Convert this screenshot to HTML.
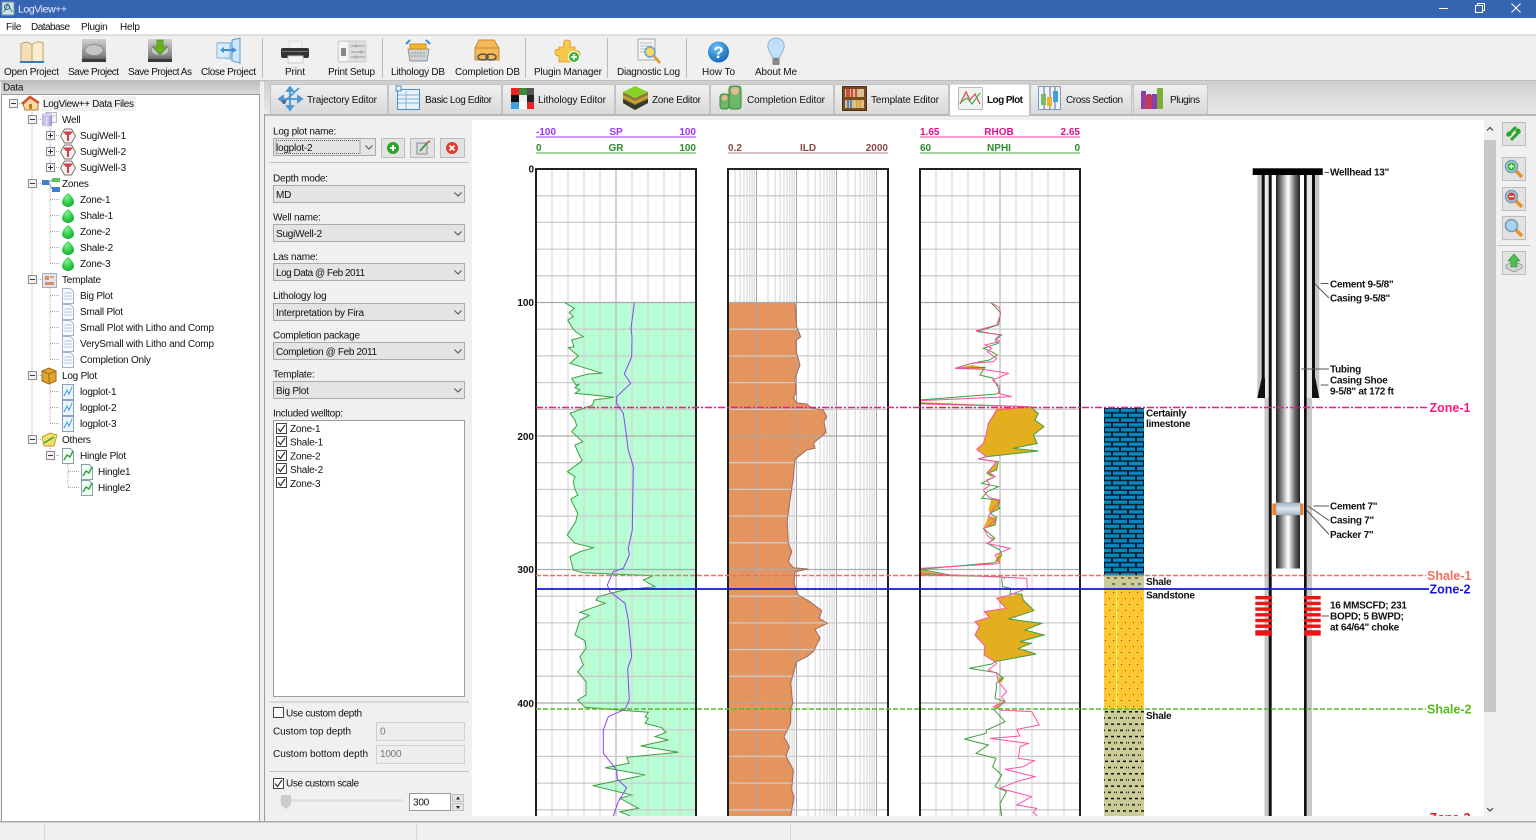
<!DOCTYPE html>
<html><head><meta charset="utf-8"><title>LogView++</title>
<style>
html,body{margin:0;padding:0;width:1536px;height:840px;overflow:hidden;background:#f0f0f0}
svg{display:block}
text{font-family:"Liberation Sans",Arial,sans-serif;font-size:10px;fill:#111;letter-spacing:-.22px}
.b{font-weight:bold;letter-spacing:0}
.w{fill:#eef}
.g{fill:#777}
.lb{font-weight:bold;fill:#111;font-size:10px;letter-spacing:-.28px}
.ns{vector-effect:non-scaling-stroke;fill:none}
.z{font-weight:bold;font-size:12.5px;letter-spacing:0}
.tl{letter-spacing:0}
</style></head><body>
<svg width="1536" height="840" viewBox="0 0 1536 840" xmlns="http://www.w3.org/2000/svg">
<defs>
<linearGradient id="tabg" x1="0" y1="0" x2="0" y2="1"><stop offset="0" stop-color="#f0f0f0"/><stop offset="1" stop-color="#d9d9d9"/></linearGradient>
<linearGradient id="barg" x1="0" y1="0" x2="0" y2="1"><stop offset="0" stop-color="#cfcfcf"/><stop offset="1" stop-color="#e9e9e9"/></linearGradient>
<linearGradient id="hdr" x1="0" y1="0" x2="0" y2="1"><stop offset="0" stop-color="#bdbdbd"/><stop offset="1" stop-color="#dedede"/></linearGradient>
<linearGradient id="tube" x1="0" y1="0" x2="1" y2="0"><stop offset="0" stop-color="#222"/><stop offset=".2" stop-color="#777"/><stop offset=".5" stop-color="#fff"/><stop offset=".55" stop-color="#eee"/><stop offset=".8" stop-color="#666"/><stop offset="1" stop-color="#222"/></linearGradient>
<linearGradient id="pack" x1="0" y1="0" x2="0" y2="1"><stop offset="0" stop-color="#9fb1c0"/><stop offset=".5" stop-color="#dde7f0"/><stop offset="1" stop-color="#a7b6c4"/></linearGradient>
<linearGradient id="disk" x1="0" y1="0" x2="0" y2="1"><stop offset="0" stop-color="#d0d0d0"/><stop offset=".7" stop-color="#8e8e8e"/><stop offset="1" stop-color="#555"/></linearGradient>
<linearGradient id="cyl" x1="0" y1="0" x2="1" y2="0"><stop offset="0" stop-color="#b4b4e6"/><stop offset=".5" stop-color="#d9d9f6"/><stop offset="1" stop-color="#8f8fd0"/></linearGradient>
<radialGradient id="blueb" cx=".4" cy=".3" r=".8"><stop offset="0" stop-color="#6cc0f5"/><stop offset="1" stop-color="#0a5db4"/></radialGradient>
<radialGradient id="grb" cx=".4" cy=".3" r=".8"><stop offset="0" stop-color="#7ff08a"/><stop offset="1" stop-color="#05a81f"/></radialGradient>
<pattern id="logg" patternUnits="userSpaceOnUse" x="756" y="0" width="40" height="10">
<path d="M.5 0V10" stroke="#aaa" stroke-width="1"/>
<path d="M12 0V10M19.100 0V10M24.100 0V10M28 0V10M31.100 0V10M33.800 0V10M36.100 0V10M38.200 0V10" stroke="#d4d4d4" stroke-width="1"/>
</pattern>
<pattern id="brick" patternUnits="userSpaceOnUse" x="1104" y="408" width="16" height="9.66">
<rect width="16" height="9.66" fill="#04202e"/>
<rect x="1" y=".8" width="14" height="3.300" fill="#0a88c4"/>
<rect x="9" y="5.600" width="14" height="3.300" fill="#0a88c4"/>
<rect x="-7" y="5.600" width="14" height="3.300" fill="#0a88c4"/>
</pattern>
<pattern id="sand" patternUnits="userSpaceOnUse" x="1104" y="589" width="8" height="12">
<rect width="8" height="12" fill="#ffc832"/>
<rect x="1" y="3" width="1" height="1" fill="#443"/><rect x="5" y="9" width="1" height="1" fill="#443"/>
</pattern>
<pattern id="shale" patternUnits="userSpaceOnUse" x="1104" y="709" width="12" height="12.4">
<rect width="12" height="12.4" fill="#cccc99"/>
<rect x="1" y="2" width="3" height="1.500" fill="#111"/><rect x="7" y="2" width="3" height="1.500" fill="#111"/>
<rect x="0" y="8.200" width="1" height="1.500" fill="#111"/><rect x="4" y="8.200" width="3" height="1.500" fill="#111"/><rect x="10" y="8.200" width="1" height="1.500" fill="#111"/>
</pattern>
<clipPath id="plot"><rect x="472" y="120" width="1012" height="696"/></clipPath>
<symbol id="drop" viewBox="0 0 14 14" overflow="visible"><path d="M7 0C10 2 13 6 13 9a6 5 0 0 1-12 0C1 6 4 2 7 0z" fill="url(#grb)"/></symbol>
<symbol id="well" viewBox="0 0 16 16" overflow="visible"><path d="M4.500 1H11.500L15.500 8L11.500 15H4.500L.5 8z" fill="#f6f0f0" stroke="#777"/><path d="M3 3.500H13L10 7H9V13H7V7H6z" fill="#c9424a"/></symbol>
<symbol id="doc" viewBox="0 0 14 16" overflow="visible"><path d="M1.500 .5H9.500L12.500 3.500V15.500H1.500z" fill="#f6f9ff" stroke="#a4b4cc"/><path d="M3 5H11M3 8H11M3 11H11" stroke="#b5c5dd"/></symbol>
<symbol id="chart" viewBox="0 0 14 16" overflow="visible"><path d="M1.500 .5H12.500V15.500H1.500z" fill="#eef3fa" stroke="#8ba0bb"/><path d="M3 12L6 6L8 10L11 3" stroke="#3aa0d8" fill="none"/></symbol>
<symbol id="hinge" viewBox="0 0 14 16" overflow="visible"><path d="M1.500 .5H9.500L12.500 3.500V15.500H1.500z" fill="#f2fff2" stroke="#8aa0b0"/><path d="M3 12L6 7L9 9L12 3" stroke="#2da14e" fill="none" stroke-width="1.400"/></symbol>
<symbol id="minus" viewBox="0 0 9 9" overflow="visible"><rect x=".5" y=".5" width="8" height="8" fill="#f2f2f2" stroke="#8c8c8c"/><path d="M2 4.500H7" stroke="#335"/></symbol>
<symbol id="plus" viewBox="0 0 9 9" overflow="visible"><rect x=".5" y=".5" width="8" height="8" fill="#f2f2f2" stroke="#8c8c8c"/><path d="M2 4.500H7M4.500 2V7" stroke="#335"/></symbol>
<symbol id="mag" viewBox="0 0 24 24" overflow="visible"><rect x=".5" y=".5" width="23" height="23" fill="#e2e2e2" stroke="#bcbcbc"/><path d="M14 14L20 20" stroke="#e5922f" stroke-width="3.500"/><circle cx="9.500" cy="9.500" r="6" fill="#a8d4ef" stroke="#7a9bb0" stroke-width="1.500"/></symbol>
<symbol id="cb" viewBox="0 0 11 11" overflow="visible"><rect x=".5" y=".5" width="10" height="10" fill="#fff" stroke="#444"/><path d="M2 5.500L4.500 8.500L9 2" stroke="#333" fill="none" stroke-width="1.200"/></symbol>
<symbol id="chev" viewBox="0 0 8 5" overflow="visible"><path d="M.5 .5L4 4L7.500 .5" stroke="#555" fill="none" stroke-width="1.100"/></symbol>
</defs>

<rect width="1536" height="840" fill="#f0f0f0"/>
<!-- title bar -->
<rect width="1536" height="18" fill="#3565b0"/>
<rect x="2" y="2" width="12" height="13" fill="#cfe3e8" stroke="#7a95aa"/><path d="M4 12L8 4L12 12" stroke="#23914a" fill="none"/><circle cx="7" cy="7" r="2.500" fill="none" stroke="#274fa0"/>
<text x="18" y="12.500" class="w" textLength="49" style="font-size:10.500px;letter-spacing:0">LogView++</text>
<path d="M1439 8.500H1448" stroke="#fff"/><path d="M1475.500 5.500h7v7h-7zM1477.500 5.500v-2h7v7h-2" fill="none" stroke="#fff"/><path d="M1511.500 3.500l9 9M1520.500 3.500l-9 9" stroke="#fff" stroke-width="1.100"/>
<!-- menu -->
<rect y="18" width="1536" height="17" fill="#fff"/>
<text x="6" y="30">File</text><text x="31" y="30" textLength="39" class="tl">Database</text><text x="81" y="30">Plugin</text><text x="120" y="30">Help</text>
<rect y="34.500" width="1536" height="1" fill="#c4c4c4"/>
<!-- toolbar -->
<rect y="35.500" width="1536" height="45" fill="#f0f0f0"/>
<rect y="80" width="1536" height="1.500" fill="#bdbdbd"/>
<path d="M262.500 38V78M382.500 38V78M525.500 38V78M607.500 38V78M686.500 38V78" stroke="#bbb"/>
<!-- Toolbar icons -->
<path d="M21 44Q27 40 32 45V62H21z" fill="#f5dfb8" stroke="#c79b63"/><path d="M32 45Q37 40 43 43V62H32z" fill="#fbeed0" stroke="#c79b63"/><path d="M20 62H44" stroke="#3c78b8" stroke-width="2"/>
<rect x="82" y="39" width="24" height="22" rx="1" fill="url(#disk)"/><ellipse cx="94" cy="50" rx="9" ry="5.500" fill="#c6c6c6" stroke="#8c8c8c"/><rect x="82" y="59" width="24" height="3" fill="#3a3a3a"/>
<rect x="148" y="39" width="24" height="22" rx="1" fill="url(#disk)"/><ellipse cx="160" cy="50" rx="9" ry="5.500" fill="#c6c6c6" stroke="#8c8c8c"/><rect x="148" y="59" width="24" height="3" fill="#3a3a3a"/><path d="M157 40H163V47H167L160 55L153 47H157z" fill="#66b31e" stroke="#3e7d12" stroke-width=".6"/>
<path d="M217 42H240V62L217 57z" fill="#a9d0ee"/><path d="M232 40L240 38V63L232 61z" fill="#cfe6f8" stroke="#5e9ad0"/><rect x="217" y="43" width="13" height="15" fill="#d7ebfa" stroke="#85b5de"/><path d="M220 50L224 47V49H232V47L237 50L232 53V51H224V53z" fill="#3f8dd4"/>
<rect x="289" y="41" width="13" height="8" fill="#f2f2f2" stroke="#ddd"/><rect x="281" y="48" width="28" height="10" rx="2" fill="#333"/><rect x="288" y="56" width="15" height="7" fill="#f4f4f4" stroke="#ccc"/><rect x="282" y="51" width="26" height="1" fill="#777"/>
<rect x="338" y="41" width="28" height="21" rx="1" fill="#dedede" stroke="#ccc"/><rect x="339" y="42" width="9" height="19" fill="#f5f5f5"/><rect x="341" y="48" width="5" height="8" fill="#888"/><path d="M351 46H365M351 52H365M351 57H365" stroke="#999"/><circle cx="356" cy="46" r="1.500" fill="#aaa"/><circle cx="361" cy="52" r="1.500" fill="#aaa"/><circle cx="356" cy="57" r="1.500" fill="#aaa"/>
<path d="M408 49H429L427 61H410z" fill="#cfd3d6" stroke="#8f969b"/><path d="M410 44H426V49H410z" fill="#f2b632" stroke="#c68a19"/><path d="M406 44L410 40M430 44L426 40" stroke="#3a90d5" stroke-width="2"/><path d="M411 53H426M411 56H426" stroke="#899" stroke-dasharray="2 1"/>
<path d="M475 48L479 40H494L499 48V60H475z" fill="#f4ba58" stroke="#c08a2c"/><path d="M475 48H499" stroke="#c08a2c"/><ellipse cx="483" cy="57" rx="5" ry="3" fill="none" stroke="#555" stroke-width="1.500"/><ellipse cx="491" cy="57" rx="5" ry="3" fill="none" stroke="#555" stroke-width="1.500"/>
<path d="M559 47H564Q562 40 567 40T570 47H575V51Q580 50 580 54T575 58V62H559V56Q555 56 555 52T559 50z" fill="#f6c84c" stroke="#e09a1e" stroke-width=".8"/><circle cx="574" cy="57" r="5.500" fill="#3bb33b" stroke="#fff"/><path d="M574 54V60M571 57H577" stroke="#fff" stroke-width="1.500"/>
<rect x="638" y="39" width="17" height="21" fill="#f4f4f4" stroke="#a8a8a8"/><path d="M640 43H652M640 46H652M640 49H646M640 52H645" stroke="#bbb"/><circle cx="650" cy="52" r="5" fill="#f4d76a" stroke="#6ca3cc" stroke-width="1.500"/><path d="M654 56L660 63" stroke="#e5922f" stroke-width="2.500"/>
<circle cx="718.500" cy="52" r="10.500" fill="url(#blueb)"/><text x="718.500" y="58" text-anchor="middle" class="b" style="font-size:17px;fill:#fff">?</text>
<path d="M776 38C770 38 767 43 768 48C769 52 772 55 772.500 58H779.500C780 55 783 52 784 48C785 43 782 38 776 38z" fill="#bfe0f8" stroke="#8fb6d6"/><rect x="772.500" y="58" width="7" height="7" rx="1" fill="#888"/>
<g>
<text x="4" y="75" class="tl" textLength="55">Open Project</text><text x="68" y="75" class="tl" textLength="51">Save Project</text><text x="128" y="75" class="tl" textLength="64">Save Project As</text><text x="201" y="75" class="tl" textLength="55">Close Project</text><text x="285" y="75" class="tl" textLength="20">Print</text><text x="328" y="75" class="tl" textLength="47">Print Setup</text><text x="391" y="75" class="tl" textLength="54">Lithology DB</text><text x="455" y="75" class="tl" textLength="65">Completion DB</text><text x="534" y="75" class="tl" textLength="68">Plugin Manager</text><text x="617" y="75" class="tl" textLength="63">Diagnostic Log</text><text x="702" y="75" class="tl" textLength="33">How To</text><text x="755" y="75" class="tl" textLength="42">About Me</text>
</g>

<!-- Left panel -->
<rect x="1" y="81" width="259" height="14" fill="url(#hdr)"/>
<text x="3" y="90.500">Data</text>
<rect x="1.500" y="94.500" width="258" height="727" fill="#fff" stroke="#9a9a9a"/>
<rect x="42" y="96" width="94" height="15" fill="#f0f0f0"/>
<g stroke="#a8a8a8" stroke-dasharray="1 1" fill="none">
<path d="M17 103.500H22M32 108V440M36 119.500H41M50 124V168M54 135.500H60M54 151.500H60M54 167.500H60"/>
<path d="M36 183.500H41M50 188V264M50 199.500H60M50 215.500H60M50 231.500H60M50 247.500H60M50 263.500H60"/>
<path d="M36 279.500H41M50 284V360M50 295.500H60M50 311.500H60M50 327.500H60M50 343.500H60M50 359.500H60"/>
<path d="M36 375.500H41M50 380V424M50 391.500H60M50 407.500H60M50 423.500H60"/>
<path d="M36 439.500H41M50 444V456M54 455.500H60M68 462V488M68 471.500H80M68 487.500H80"/>
</g>
<use href="#minus" x="9" y="99" width="9" height="9"/>
<use href="#minus" x="28" y="115" width="9" height="9"/>
<use href="#plus" x="46" y="131" width="9" height="9"/><use href="#plus" x="46" y="147" width="9" height="9"/><use href="#plus" x="46" y="163" width="9" height="9"/>
<use href="#minus" x="28" y="179" width="9" height="9"/><use href="#minus" x="28" y="275" width="9" height="9"/><use href="#minus" x="28" y="371" width="9" height="9"/><use href="#minus" x="28" y="435" width="9" height="9"/><use href="#minus" x="46" y="451" width="9" height="9"/>
<!-- tree icons -->
<path d="M23 104L31 97L38 102V110H25z" fill="#f4d9a0" stroke="#b57a3a"/><path d="M22 104L30 97L39 103" fill="none" stroke="#d0532a" stroke-width="2.500"/><rect x="29" y="104" width="3" height="5" fill="#c07a30"/>
<rect x="46.500" y="112.500" width="10" height="10" fill="#f4f4f4" stroke="#b8b8c8"/><path d="M46 116H56M51 112V122" stroke="#c8c8d4"/><path d="M42 115V125C42 127 52 127 52 125V115z" fill="url(#cyl)"/><ellipse cx="47" cy="115" rx="5" ry="1.500" fill="#d4d4f4" stroke="#a4a4d8" stroke-width=".5"/>
<use href="#well" x="60" y="128" width="16" height="16"/><use href="#well" x="60" y="144" width="16" height="16"/><use href="#well" x="60" y="160" width="16" height="16"/>
<rect x="42" y="180" width="7" height="5" fill="#3d7fd6"/><rect x="52" y="178" width="8" height="4" fill="#5cc35c"/><rect x="52" y="187" width="8" height="5" fill="#3d7fd6"/><path d="M49 182L52 180M49 183L52 189" stroke="#6a8ab0"/>
<use href="#drop" x="61" y="193" width="14" height="14"/><use href="#drop" x="61" y="209" width="14" height="14"/><use href="#drop" x="61" y="225" width="14" height="14"/><use href="#drop" x="61" y="241" width="14" height="14"/><use href="#drop" x="61" y="257" width="14" height="14"/>
<rect x="42.500" y="273.500" width="14" height="14" fill="#dde4ee" stroke="#aab"/><rect x="45" y="276" width="4" height="4" fill="#e08a60"/><rect x="50" y="276" width="4" height="2" fill="#e0a060"/><rect x="45" y="282" width="9" height="3" fill="#e08a60"/>
<use href="#doc" x="61" y="288" width="14" height="16"/><use href="#doc" x="61" y="304" width="14" height="16"/><use href="#doc" x="61" y="320" width="14" height="16"/><use href="#doc" x="61" y="336" width="14" height="16"/><use href="#doc" x="61" y="352" width="14" height="16"/>
<path d="M42 371L49 368L56 371V381L49 384L42 381z" fill="#e0a52e" stroke="#9a6f14"/><path d="M42 371L49 374L56 371M49 374V384" stroke="#9a6f14" fill="none"/>
<use href="#chart" x="61" y="384" width="14" height="16"/><use href="#chart" x="61" y="400" width="14" height="16"/><use href="#chart" x="61" y="416" width="14" height="16"/>
<path d="M42 437L50 433L57 435L54 446H44z" fill="#f2e06a" stroke="#b8a232"/><path d="M44 443L54 437" stroke="#3aa03a" stroke-width="1.500"/>
<use href="#hinge" x="61" y="448" width="14" height="16"/><use href="#hinge" x="80" y="464" width="14" height="16"/><use href="#hinge" x="80" y="480" width="14" height="16"/>
<!-- tree text -->
<text x="43" y="107" class="tl" textLength="91">LogView++ Data Files</text>
<g>
<text x="62" y="123">Well</text><text x="80" y="139">SugiWell-1</text><text x="80" y="155">SugiWell-2</text><text x="80" y="171">SugiWell-3</text>
<text x="62" y="187">Zones</text><text x="80" y="203">Zone-1</text><text x="80" y="219">Shale-1</text><text x="80" y="235">Zone-2</text><text x="80" y="251">Shale-2</text><text x="80" y="267">Zone-3</text>
<text x="62" y="283">Template</text><text x="80" y="299">Big Plot</text><text x="80" y="315">Small Plot</text><text x="80" y="331" class="tl" textLength="134">Small Plot with Litho and Comp</text><text x="80" y="347" class="tl" textLength="134">VerySmall with Litho and Comp</text><text x="80" y="363">Completion Only</text>
<text x="62" y="379">Log Plot</text><text x="80" y="395">logplot-1</text><text x="80" y="411">logplot-2</text><text x="80" y="427">logplot-3</text>
<text x="62" y="443">Others</text><text x="80" y="459">Hingle Plot</text><text x="98" y="475">Hingle1</text><text x="98" y="491">Hingle2</text>
</g>

<!-- Tab area -->
<rect x="264" y="81" width="1272" height="34" fill="url(#barg)"/>
<rect x="264" y="114" width="1272" height="2" fill="#b8b8b8"/>
<rect x="264" y="116" width="1272" height="705" fill="#f0f0f0"/>
<path d="M264.500 114V822" stroke="#9a9a9a"/>
<g fill="url(#tabg)" stroke="#c2c2c2">
<path d="M270.500 114V86Q270.500 84.500 272 84.500H386Q387.500 84.500 387.500 86V114"/>
<path d="M388.500 114V86Q388.500 84.500 390 84.500H500Q501.500 84.500 501.500 86V114"/>
<path d="M502.500 114V86Q502.500 84.500 504 84.500H613Q614.500 84.500 614.500 86V114"/>
<path d="M615.500 114V86Q615.500 84.500 617 84.500H708Q709.500 84.500 709.500 86V114"/>
<path d="M710.500 114V86Q710.500 84.500 712 84.500H832Q833.500 84.500 833.500 86V114"/>
<path d="M834.500 114V86Q834.500 84.500 836 84.500H947Q948.500 84.500 948.500 86V114"/>
<path d="M1030.500 114V86Q1030.500 84.500 1032 84.500H1130Q1131.500 84.500 1131.500 86V114"/>
<path d="M1133.500 114V86Q1133.500 84.500 1135 84.500H1206Q1207.500 84.500 1207.500 86V114"/>
</g>
<path d="M949.500 116V85Q949.500 84 951 84H1028Q1029.500 84 1029.500 85V116z" fill="#fff" stroke="#c2c2c2"/>
<!-- tab icons -->
<path d="M283 103L299 88M290 87V110M279 99H302M290 87L287 91H293zM290 110L287 106H293zM279 99L283 96V102zM302 99L298 96V102z" fill="#4a97d4" stroke="#4a97d4" stroke-width="1.800"/><circle cx="284" cy="102" r="2" fill="#666"/>
<rect x="397.500" y="89.500" width="22" height="20" fill="#e9f2fb" stroke="#4a90c8"/><rect x="396" y="86" width="5" height="5" fill="#e8f0f8" stroke="#4a90c8"/><path d="M398 95H419M398 99H419M398 103H419M406 91V109" stroke="#7fb2d8"/>
<rect x="511" y="88" width="8" height="7" fill="#e22"/><rect x="519" y="88" width="8" height="7" fill="#3a8a3a"/><rect x="527" y="88" width="7" height="7" fill="#555"/><rect x="511" y="95" width="8" height="7" fill="#111"/><rect x="519" y="95" width="8" height="7" fill="#eee"/><rect x="527" y="95" width="7" height="7" fill="#222"/><rect x="511" y="102" width="8" height="7" fill="#3aa0e0"/><rect x="519" y="102" width="8" height="7" fill="#fff"/><rect x="527" y="102" width="7" height="7" fill="#e22"/>
<path d="M623 92L635 86L648 92L635 98z" fill="#8ad12a"/><path d="M623 92V103L635 110L648 103V92L635 98z" fill="#8a7a35"/><path d="M623 99L635 105L648 99V103L635 110L623 103z" fill="#3a3a2a"/><path d="M623 95L635 101L648 95V98L635 104L623 98z" fill="#c9a037"/>
<rect x="720" y="94" width="9" height="15" rx="3" fill="#6cb866" stroke="#3a8a3a"/><rect x="729" y="86" width="12" height="23" rx="3" fill="#6cb866" stroke="#3a8a3a"/><ellipse cx="735" cy="91" rx="4" ry="4" fill="#e0b893"/><ellipse cx="724.500" cy="98" rx="3" ry="3" fill="#e0b893"/>
<rect x="842.500" y="86.500" width="24" height="24" fill="#7a4a20" stroke="#4e2e10"/><rect x="845" y="89" width="19" height="8" fill="#d9c090"/><rect x="845" y="100" width="19" height="8" fill="#d9c090"/><path d="M847 89V97M849 89V97M852 89V97M856 89V97" stroke="#c22" stroke-width="1.500"/><path d="M848 100V108M851 100V108" stroke="#2a7ac0" stroke-width="1.600"/><path d="M857 100V108M860 100V108" stroke="#e0a030" stroke-width="1.600"/>
<rect x="958.500" y="87.500" width="24" height="22" rx="1" fill="#eef3f0" stroke="#b8b8b8"/><path d="M960 104L966 92L970 100L975 94L980 104" fill="none" stroke="#d9534f" stroke-width="1.300"/><path d="M961 102L967 98L972 104L980 93" fill="none" stroke="#4caf50" stroke-width="1.300"/>
<rect x="1038.500" y="86.500" width="22" height="23" fill="#eef4fb" stroke="#7c99b8"/><path d="M1044 87V109M1050 87V109M1055 87V109" stroke="#667"/><rect x="1041" y="94" width="5" height="11" fill="#7dbb60"/><rect x="1047" y="97" width="5" height="9" fill="#f0b030"/><rect x="1053" y="91" width="5" height="11" fill="#3aa0e0"/>
<path d="M1141 91H1146V109H1141zM1147 94H1151V109H1147zM1152 94H1157V109H1152z" fill="#8a3fb0"/><path d="M1157 88H1163V109H1157z" fill="#7ab03a"/><path d="M1145 95H1152V109H1145z" fill="#c23a5a"/>
<text x="307" y="103" class="tl" textLength="70">Trajectory Editor</text><text x="425" y="103" class="tl" textLength="67">Basic Log Editor</text><text x="538" y="103" class="tl" textLength="68">Lithology Editor</text><text x="652" y="103" class="tl" textLength="49">Zone Editor</text><text x="747" y="103" class="tl" textLength="78">Completion Editor</text><text x="871" y="103" class="tl" textLength="68">Template Editor</text><text x="987" y="103" class="b" textLength="36">Log Plot</text><text x="1066" y="103" class="tl" textLength="57">Cross Section</text><text x="1170" y="103" class="tl" textLength="30">Plugins</text>

<!-- form -->
<text x="273" y="134.500">Log plot name:</text>
<rect x="273.500" y="138.500" width="102" height="17" fill="#e4e4e4" stroke="#ababab"/>
<rect x="276" y="140.500" width="84" height="13" fill="none" stroke="#666" stroke-dasharray="1 1"/>
<text x="276" y="151">logplot-2</text>
<use href="#chev" x="365" y="145" width="8" height="5"/>
<g fill="#e2e2e2" stroke="#bbb"><rect x="381.500" y="138.500" width="23" height="19"/><rect x="410.500" y="138.500" width="24" height="19"/><rect x="440.500" y="138.500" width="24" height="19"/></g>
<circle cx="393" cy="148" r="6" fill="#2aa52a"/><path d="M393 145V151M390 148H396" stroke="#fff" stroke-width="1.800"/>
<path d="M417 143H427V154H417z" fill="#dcdcdc" stroke="#889"/><path d="M420 151L427 143" stroke="#3a9a3a" stroke-width="1.800"/><path d="M427 143L430 141" stroke="#d33" stroke-width="1.500"/>
<circle cx="452" cy="148" r="6" fill="#e0402a"/><path d="M449.500 145.500L454.500 150.500M454.500 145.500L449.500 150.500" stroke="#fff" stroke-width="1.800"/>
<rect x="269" y="162" width="200" height="1" fill="#c0c0c0"/>
<g fill="#e4e4e4" stroke="#ababab">
<rect x="273.500" y="185.500" width="191" height="17"/><rect x="273.500" y="224.500" width="191" height="17"/><rect x="273.500" y="263.500" width="191" height="17"/><rect x="273.500" y="303.500" width="191" height="17"/><rect x="273.500" y="342.500" width="191" height="17"/><rect x="273.500" y="381.500" width="191" height="17"/>
</g>
<use href="#chev" x="454" y="192" width="8" height="5"/><use href="#chev" x="454" y="231" width="8" height="5"/><use href="#chev" x="454" y="270" width="8" height="5"/><use href="#chev" x="454" y="310" width="8" height="5"/><use href="#chev" x="454" y="349" width="8" height="5"/><use href="#chev" x="454" y="388" width="8" height="5"/>
<text x="273" y="181.500">Depth mode:</text><text x="276" y="198">MD</text>
<text x="273" y="220.500">Well name:</text><text x="276" y="237">SugiWell-2</text>
<text x="273" y="260">Las name:</text><text x="276" y="276" class="tl" textLength="89">Log Data @ Feb 2011</text>
<text x="273" y="299">Lithology log</text><text x="276" y="316" class="tl" textLength="88">Interpretation by Fira</text>
<text x="273" y="338.500" class="tl" textLength="87">Completion package</text><text x="276" y="355" class="tl" textLength="101">Completion @ Feb 2011</text>
<text x="273" y="377.500">Template:</text><text x="276" y="394">Big Plot</text>
<text x="273" y="416.500" class="tl" textLength="70">Included welltop:</text>
<rect x="273.500" y="420.500" width="191" height="276" fill="#fff" stroke="#9c9c9c"/>
<use href="#cb" x="276" y="423" width="11" height="11"/><use href="#cb" x="276" y="436" width="11" height="11"/><use href="#cb" x="276" y="450" width="11" height="11"/><use href="#cb" x="276" y="463" width="11" height="11"/><use href="#cb" x="276" y="477" width="11" height="11"/>
<text x="290" y="432">Zone-1</text><text x="290" y="445.500">Shale-1</text><text x="290" y="459.500">Zone-2</text><text x="290" y="473">Shale-2</text><text x="290" y="487">Zone-3</text>
<rect x="269" y="701.500" width="200" height="1" fill="#c0c0c0"/>
<rect x="273.500" y="707.500" width="10" height="10" fill="#fff" stroke="#444"/><text x="286" y="716.500" class="tl" textLength="76">Use custom depth</text>
<text x="273" y="734.500" class="tl" textLength="78">Custom top depth</text><rect x="376.500" y="722.500" width="88" height="18" fill="#ededed" stroke="#d0d0d0"/><text x="380" y="734.500" class="g">0</text>
<text x="273" y="757" class="tl" textLength="95">Custom bottom depth</text><rect x="376.500" y="745.500" width="88" height="18" fill="#ededed" stroke="#d0d0d0"/><text x="380" y="757" class="g">1000</text>
<rect x="269" y="771" width="200" height="1" fill="#c0c0c0"/>
<use href="#cb" x="273" y="778" width="11" height="11"/><text x="286" y="786.500" class="tl" textLength="73">Use custom scale</text>
<rect x="279" y="799" width="124" height="3" rx="1" fill="#e2e2e2"/><path d="M281 795H291V805L286 809L281 805z" fill="#cdcdcd"/>
<rect x="409.500" y="793.500" width="41" height="17" fill="#fff" stroke="#9a9a9a"/><text x="413" y="805.500">300</text>
<rect x="452.500" y="794.500" width="11" height="7" fill="#e4e4e4" stroke="#c0c0c0"/><rect x="452.500" y="803.500" width="11" height="7" fill="#e4e4e4" stroke="#c0c0c0"/><path d="M456 799.500L458 796.500L460 799.500zM456 806L458 809L460 806z" fill="#222"/>

<!-- plot -->
<rect x="472" y="120" width="1012" height="696" fill="#fff"/>
<g clip-path="url(#plot)">
<!-- headers -->
<g>
<text x="536" y="135" class="b" style="fill:#9a33ff">-100</text><text x="616" y="135" text-anchor="middle" class="b" style="fill:#9a33ff">SP</text><text x="696" y="135" text-anchor="end" class="b" style="fill:#9a33ff">100</text>
<text x="536" y="151" class="b" style="fill:#2c8b2c">0</text><text x="616" y="151" text-anchor="middle" class="b" style="fill:#2c8b2c">GR</text><text x="696" y="151" text-anchor="end" class="b" style="fill:#2c8b2c">100</text>
<text x="728" y="151" class="b" style="fill:#8a4a4a">0.2</text><text x="808" y="151" text-anchor="middle" class="b" style="fill:#8a4a4a">ILD</text><text x="888" y="151" text-anchor="end" class="b" style="fill:#8a4a4a">2000</text>
<text x="920" y="135" class="b" style="fill:#e0108a">1.65</text><text x="999" y="135" text-anchor="middle" class="b" style="fill:#e0108a">RHOB</text><text x="1080" y="135" text-anchor="end" class="b" style="fill:#e0108a">2.65</text>
<text x="920" y="151" class="b" style="fill:#2c8b2c">60</text><text x="999" y="151" text-anchor="middle" class="b" style="fill:#2c8b2c">NPHI</text><text x="1080" y="151" text-anchor="end" class="b" style="fill:#2c8b2c">0</text>
</g>
<path d="M536 137H696" stroke="#9a33ff"/><path d="M536 153H696" stroke="#4aa04a"/><path d="M728 153H888" stroke="#b08585"/><path d="M920 137H1080" stroke="#f040a0"/><path d="M920 153H1080" stroke="#4aa04a"/>
<text x="534" y="172.500" text-anchor="end" class="b">0</text><text x="534" y="306" text-anchor="end" class="b">100</text><text x="534" y="440" text-anchor="end" class="b">200</text><text x="534" y="573" text-anchor="end" class="b">300</text><text x="534" y="707" text-anchor="end" class="b">400</text>
<!-- fills -->
<polygon fill="#b9fdd5" points="696,302.500 565,302.700 574.300,308.300 569.300,312.700 573.300,316.700 567.700,320 573.300,329.300 576,332 583.300,336.700 571.700,340 574,346.700 568.300,347.700 578.300,356 570,363.300 602.300,373.300 588.300,374 571.700,378.300 576,385 579.300,384 575,387.700 580,390 575,393.300 614,397.300 594,400 592.700,405 570,413.300 575,420 576.700,425.700 571.700,431.700 582.700,441.700 575,445 578.300,453.300 582.300,460.700 567.300,471.700 575,476.700 573.300,481.700 575,489.300 577.700,495 570.700,499.300 577.700,513.300 575.700,521.700 567.300,535 575,543.300 593.300,547.700 580,551.700 570,556.700 573.300,570 583.300,572.700 653.300,575.700 643.300,580 655,586.700 623.300,590 598.300,596.700 596,600 605,603.300 580,612.300 589,615.700 580,620 575,635 585,640.700 586,648.300 580,656.700 583.300,665 577.700,671.700 586,681.700 586,695 577.700,700 585,707.300 648.300,712.300 645,716.700 648.300,718.300 645,723.300 661.700,727.700 666,732.300 655,736.700 668.300,740 640.700,746 678.300,752.300 626.700,757.300 629,763.300 605,767.700 645,775 592.700,785.700 631.700,795 620,798.300 638.300,808.300 620,811.700 630,816 696,816"/>
<!-- log grid beneath fill -->
<rect x="728" y="169" width="160" height="647" fill="url(#logg)"/>
<polygon fill="#e2894f" fill-opacity=".9" points="728,302.500 795,302.700 796.700,326.700 800.700,336.700 796,340.700 796.700,353.300 800,365 795,378.300 796,393.300 793.300,398.300 796.700,402.700 806.700,404 811.700,408.300 823.300,410 826.700,416.700 824,421.700 826,432.700 813.300,443.300 815,448.300 806.700,450 795,459.300 793,480 790,500 787.300,520 788.300,543.300 791.700,551.700 788.300,561.700 793.300,567.700 808.300,569 795,571.700 794,583.300 798.300,595 810,601.700 821.700,610.700 819.300,618.300 827.300,623.300 815,629.300 820,638.300 813.300,651.700 806.700,656.700 796.700,661.700 793.300,673.300 790.700,683.300 792.700,703.300 790.700,710 790.700,723.300 784,736.700 789.300,746.700 786,756 793.300,770 791.700,790 794,796.700 790.700,816 728,816"/>
<path d="M756.500 169V816M796.500 169V816M836.500 169V816M876.500 169V816" stroke="#a5a5a5"/>
<!-- grids -->
<path d="M552 169V816M568 169V816M584 169V816M600 169V816M632 169V816M648 169V816M664 169V816M680 169V816M936 169V816M952 169V816M968 169V816M984 169V816M1016 169V816M1032 169V816M1048 169V816M1064 169V816" stroke="#d2d2d2"/>
<path d="M616 169V816M1000 169V816" stroke="#aaa"/>
<g stroke="#cccccc" stroke-width="1.300">
<path d="M536 195.700H696M728 195.700H888M920 195.700H1080M536 222.400H696M728 222.400H888M920 222.400H1080M536 249.100H696M728 249.100H888M920 249.100H1080M536 275.800H696M728 275.800H888M920 275.800H1080"/>
<path d="M536 329.200H696M728 329.200H888M920 329.200H1080M536 355.900H696M728 355.900H888M920 355.900H1080M536 382.600H696M728 382.600H888M920 382.600H1080M536 409.300H696M728 409.300H888M920 409.300H1080"/>
<path d="M536 462.700H696M728 462.700H888M920 462.700H1080M536 489.400H696M728 489.400H888M920 489.400H1080M536 516.100H696M728 516.100H888M920 516.100H1080M536 542.800H696M728 542.800H888M920 542.800H1080"/>
<path d="M536 596.200H696M728 596.200H888M920 596.200H1080M536 622.900H696M728 622.900H888M920 622.900H1080M536 649.600H696M728 649.600H888M920 649.600H1080M536 676.300H696M728 676.300H888M920 676.300H1080"/>
<path d="M536 729.700H696M728 729.700H888M920 729.700H1080M536 756.400H696M728 756.400H888M920 756.400H1080M536 783.100H696M728 783.100H888M920 783.100H1080M536 809.800H696M728 809.800H888M920 809.800H1080"/>
</g>
<g stroke="#aaaaaa" stroke-width="1.200">
<path d="M536 302.500H696M728 302.500H888M920 302.500H1080M536 436H696M728 436H888M920 436H1080M536 569.500H696M728 569.500H888M920 569.500H1080M536 703H696M728 703H888M920 703H1080"/>
</g>
<!-- curves -->
<polyline fill="none" stroke="#3f9f3f" stroke-width="1" points="565,302.700 574.300,308.300 569.300,312.700 573.300,316.700 567.700,320 573.300,329.300 576,332 583.300,336.700 571.700,340 574,346.700 568.300,347.700 578.300,356 570,363.300 602.300,373.300 588.300,374 571.700,378.300 576,385 579.300,384 575,387.700 580,390 575,393.300 614,397.300 594,400 592.700,405 570,413.300 575,420 576.700,425.700 571.700,431.700 582.700,441.700 575,445 578.300,453.300 582.300,460.700 567.300,471.700 575,476.700 573.300,481.700 575,489.300 577.700,495 570.700,499.300 577.700,513.300 575.700,521.700 567.300,535 575,543.300 593.300,547.700 580,551.700 570,556.700 573.300,570 583.300,572.700 653.300,575.700 643.300,580 655,586.700 623.300,590 598.300,596.700 596,600 605,603.300 580,612.300 589,615.700 580,620 575,635 585,640.700 586,648.300 580,656.700 583.300,665 577.700,671.700 586,681.700 586,695 577.700,700 585,707.300 648.300,712.300 645,716.700 648.300,718.300 645,723.300 661.700,727.700 666,732.300 655,736.700 668.300,740 640.700,746 678.300,752.300 626.700,757.300 629,763.300 605,767.700 645,775 592.700,785.700 631.700,795 620,798.300 638.300,808.300 620,811.700 630,816"/>
<polyline fill="none" stroke="#9040f5" stroke-width="1" points="634.300,302.700 631,328.300 632,336.700 631.700,356.700 624.300,374 630.700,383.300 616.700,396.700 616.700,403.300 623.300,413.300 625.700,430 628.300,450 633.300,466.700 632.300,530 628.300,548.300 629.300,555 623.300,568.300 613.300,571.700 607.300,585 610,591.700 625,603.300 628.300,620 631.700,656.700 627.700,668.300 629.300,700 625,709.300 608.300,716.700 603.300,730 603.300,753.300 616.700,770 617.300,779.300 626.700,787.700 618.300,801.700 613.300,816"/>
<polyline fill="none" stroke="#a36a5a" stroke-width="1" points="795,302.700 796.700,326.700 800.700,336.700 796,340.700 796.700,353.300 800,365 795,378.300 796,393.300 793.300,398.300 796.700,402.700 806.700,404 811.700,408.300 823.300,410 826.700,416.700 824,421.700 826,432.700 813.300,443.300 815,448.300 806.700,450 795,459.300 793,480 790,500 787.300,520 788.300,543.300 791.700,551.700 788.300,561.700 793.300,567.700 808.300,569 795,571.700 794,583.300 798.300,595 810,601.700 821.700,610.700 819.300,618.300 827.300,623.300 815,629.300 820,638.300 813.300,651.700 806.700,656.700 796.700,661.700 793.300,673.300 790.700,683.300 792.700,703.300 790.700,710 790.700,723.300 784,736.700 789.300,746.700 786,756 793.300,770 791.700,790 794,796.700 790.700,816"/>
<!-- track 3 fragments -->
<g transform="translate(900 280) scale(.33333)">
<g fill="#e2b01e">
<polygon points="165,265 215,255 255,262 250,268"/>
<polygon points="290,385 390,382 415,400 405,420 432,440 400,465 412,490 340,505 415,513 260,530 230,508 250,490 258,465 265,430"/>
<polygon points="292,545 290,570 262,580 285,590 270,590 258,578"/>
<polygon points="275,655 300,660 295,680 300,685 270,700 265,690"/>
<polygon points="265,710 290,712 285,735 265,740 250,745"/>
<polygon points="265,770 285,775 280,782"/>
<polygon points="295,820 305,825 300,848 285,845"/>
<polygon points="60,870 120,882 60,885"/>
<polygon points="62,366 390,380 62,372"/>
</g>
<polyline class="ns" stroke="#3f9f3f" stroke-width="1" points="272,68 290,85 302,100 295,135 230,155 305,165 285,180 295,190 250,205 275,215 292,225 268,240 215,250 165,265 255,262 240,285 280,295 300,335 290,342 60,360 60,370 390,380 415,400 405,420 432,440 400,465 412,490 340,505 415,513 260,530 235,537 295,545 290,570 262,580 285,590 245,610 295,620 262,635 245,655 300,660 295,680 300,685 270,700 290,712 285,735 250,745 285,775 262,790 300,810 305,825 285,848 60,868 150,885 60,885 300,890 315,895"/>
<polyline class="ns" stroke="#ff4fa5" stroke-width="1" points="272,68 298,82 302,100 290,135 228,152 300,165 288,175 298,185 255,195 275,205 262,215 290,235 280,245 215,250 165,265 250,268 325,280 278,300 300,320 295,340 335,350 62,362 62,368 60,372 390,380 290,390 265,430 258,465 250,490 230,508 260,530 235,537 290,545 265,575 285,590 260,600 270,615 250,630 265,650 275,655 300,660 270,700 265,710 285,720 265,740 250,745 265,770 280,780 260,790 330,805 285,825 300,848 285,852 60,865 60,880 380,895"/>
</g>
<g transform="translate(700 520) scale(.33333)">
<g fill="#e2b01e">
<polygon points="890,235 965,222 970,240 1002,272 925,297 1025,310 975,330 1032,345 960,365 995,370 955,385 1008,402 885,425 852,405 855,378 825,345 838,320 825,305 868,292 853,275 918,265"/>
<polygon points="895,472 912,470 905,488 895,485"/>
<polygon points="885,555 915,542 890,565"/>
</g>
<polyline class="ns" stroke="#3f9f3f" stroke-width="1" points="905,175 908,200 932,205 930,222 965,222 970,240 1002,272 925,297 1025,310 975,330 1032,345 960,365 995,370 955,385 1008,402 885,425 875,432 808,445 890,458 910,475 888,490 890,500 885,535 915,545 890,565 883,570 915,605 860,630 858,640 793,657 865,675 828,700 888,715 878,740 905,765 885,800 920,815 900,850 905,888"/>
<polyline class="ns" stroke="#ff4fa5" stroke-width="1" points="980,175 982,205 930,225 890,235 918,265 853,275 868,292 825,305 838,320 825,345 855,378 852,405 885,425 890,430 865,450 890,460 895,485 920,515 905,530 915,545 880,560 895,565 900,570 995,575 1018,615 950,628 960,648 870,655 985,670 960,680 955,715 1003,722 970,740 915,748 1005,770 950,785 900,805 995,830 950,855 1010,865 1000,878 1012,888"/>
</g>
<!-- track frames -->
<g fill="none" stroke="#222" stroke-width="2">
<path d="M536 816V169H696V816M728 816V169H888V816M920 816V169H1080V816"/>
</g>
<!-- lithology -->
<rect x="1104" y="408" width="40" height="167.500" fill="url(#brick)"/>
<rect x="1104" y="575.500" width="40" height="13.500" fill="#cccc99"/><path d="M1107 578H1110M1114 578H1117M1121 578H1124M1128 578H1131M1135 578H1138M1112 584H1115M1122 584H1126M1131 584H1134M1138 584H1141" stroke="#222"/>
<rect x="1104" y="589" width="40" height="120" fill="url(#sand)"/><path d="M1116.700 589V709" stroke="#fff27a"/>
<rect x="1104" y="709" width="40" height="107" fill="url(#shale)"/>
<g><text x="1146" y="416.500" class="lb">Certainly</text><text x="1146" y="427" class="lb">limestone</text><text x="1146" y="585" class="lb">Shale</text><text x="1146" y="598.500" class="lb">Sandstone</text><text x="1146" y="719" class="lb">Shale</text></g>
<!-- well schematic -->
<rect x="1257.300" y="175" width="62" height="223" fill="#c8c8c8"/>
<rect x="1264.500" y="175" width="47.500" height="223" fill="#fff"/>
<rect x="1264.500" y="175" width="4.200" height="223" fill="#e6e6e6"/>
<rect x="1264.500" y="398" width="4" height="418" fill="#c8c8c8"/><rect x="1306.700" y="175" width="5.300" height="223" fill="#e6e6e6"/><rect x="1306.700" y="398" width="5.300" height="418" fill="#c8c8c8"/>
<rect x="1261.700" y="175" width="3" height="207" fill="#111"/><rect x="1312" y="175" width="3" height="207" fill="#111"/>
<path d="M1261.700 378H1265V398H1257.300zM1312 378H1315.300L1319.300 398H1312z" fill="#111"/>
<rect x="1268.700" y="175" width="3" height="641" fill="#111"/><rect x="1304" y="175" width="2.700" height="641" fill="#111"/>
<rect x="1276" y="175" width="24" height="393.500" fill="url(#tube)"/>
<rect x="1252.700" y="168.300" width="70" height="6.700" fill="#000"/>
<rect x="1272.300" y="503.500" width="3.700" height="11.500" fill="#f08020"/><rect x="1300.500" y="503.500" width="3" height="11.500" fill="#f08020"/><rect x="1276" y="502.700" width="24.500" height="12.300" fill="url(#pack)" stroke="#8a9aa8" stroke-width=".5"/>
<g fill="#f51212">
<rect x="1255.300" y="596" width="16.700" height="3.400"/><rect x="1255.300" y="601.700" width="16.700" height="3.400"/><rect x="1255.300" y="607.400" width="16.700" height="3.400"/><rect x="1255.300" y="613.100" width="16.700" height="3.400"/><rect x="1255.300" y="618.800" width="16.700" height="3.400"/><rect x="1255.300" y="624.500" width="16.700" height="3.400"/><rect x="1255.300" y="630.200" width="16.700" height="5.400"/>
<rect x="1304" y="596" width="16.700" height="3.400"/><rect x="1304" y="601.700" width="16.700" height="3.400"/><rect x="1304" y="607.400" width="16.700" height="3.400"/><rect x="1304" y="613.100" width="16.700" height="3.400"/><rect x="1304" y="618.800" width="16.700" height="3.400"/><rect x="1304" y="624.500" width="16.700" height="3.400"/><rect x="1304" y="630.200" width="16.700" height="5.400"/>
</g>
<!-- leaders -->
<g stroke="#555" fill="none">
<path d="M1324.500 172.500H1329M1320.700 283.500H1328.500M1315 284L1329 298M1301.300 369H1329M1320.700 385H1328.500"/>
<path d="M1313.500 506H1329M1308 506L1329 520.500M1306 509.500L1329 534.500M1321.500 616H1329"/>
</g>
<g>
<text x="1330" y="175.500" class="lb">Wellhead 13"</text>
<text x="1330" y="287.500" class="lb">Cement 9-5/8"</text><text x="1330" y="301.500" class="lb">Casing 9-5/8"</text>
<text x="1330" y="372.500" class="lb">Tubing</text><text x="1330" y="383.500" class="lb">Casing Shoe</text><text x="1330" y="394.500" class="lb">9-5/8" at 172 ft</text>
<text x="1330" y="509.500" class="lb">Cement 7"</text><text x="1330" y="523.500" class="lb">Casing 7"</text><text x="1330" y="538" class="lb">Packer 7"</text>
<text x="1330" y="608.500" class="lb">16 MMSCFD; 231</text><text x="1330" y="619.500" class="lb">BOPD; 5 BWPD;</text><text x="1330" y="630.500" class="lb">at 64/64" choke</text>
</g>
<!-- zone lines -->
<path d="M536 407.500H1428" stroke="#ff1480" stroke-width="1.600" stroke-dasharray="7 2 2 2"/>
<path d="M536 575.500H1426" stroke="#f0705f" stroke-width="1.500" stroke-dasharray="5 2"/>
<path d="M536 589H1429" stroke="#1515e0" stroke-width="1.800"/>
<path d="M536 709H1426" stroke="#55bb22" stroke-width="1.500" stroke-dasharray="5 2"/>
<text x="1429.500" y="412" class="z" style="fill:#ff1a80">Zone-1</text>
<text x="1427" y="580" class="z" style="fill:#f0705f">Shale-1</text>
<text x="1429.500" y="593.500" class="z" style="fill:#1515e0">Zone-2</text>
<text x="1427" y="713.500" class="z" style="fill:#55bb22">Shale-2</text>
<text x="1429.500" y="822" class="z" style="fill:#ee1111">Zone-3</text>
</g>
<!-- scrollbar -->
<rect x="1484" y="120" width="12" height="696" fill="#f0f0f0"/>
<rect x="1484" y="140" width="12" height="572" fill="#c8c8c8"/>
<path d="M1487 130.500L1490 127.500L1493 130.500" fill="none" stroke="#444" stroke-width="1.200"/>
<path d="M1487 808L1490 811L1493 808" fill="none" stroke="#444" stroke-width="1.200"/>
<!-- side buttons -->
<rect x="1502.500" y="122.500" width="23" height="23" fill="#e2e2e2" stroke="#bcbcbc"/>
<path d="M1507 136L1516 127M1511 140L1520 131" stroke="#2aa52a" stroke-width="3"/><circle cx="1509" cy="134" r="2.500" fill="#2aa52a"/><circle cx="1518" cy="131" r="2.500" fill="#2aa52a"/>
<use href="#mag" x="1502" y="157" width="24" height="24"/><circle cx="1511.500" cy="166.500" r="4" fill="#35b435"/><path d="M1509 166.500H1514M1511.500 164V169" stroke="#fff" stroke-width="1.200"/>
<use href="#mag" x="1502" y="187" width="24" height="24"/><circle cx="1511.500" cy="196.500" r="4" fill="#dc3b3b"/><path d="M1509 196.500H1514" stroke="#fff" stroke-width="1.300"/>
<use href="#mag" x="1502" y="216" width="24" height="24"/>
<rect x="1497" y="245" width="33" height="1" fill="#c4c4c4"/>
<rect x="1502.500" y="251.500" width="23" height="23" fill="#e2e2e2" stroke="#bcbcbc"/>
<path d="M1506 265L1514 261L1522 265V268L1514 272L1506 268z" fill="#d4d4d4" stroke="#777" stroke-width=".6"/><path d="M1514 254L1520 261H1517V267H1511V261H1508z" fill="#4fc04f" stroke="#2a8a2a" stroke-width=".6"/>
<!-- bottom -->
<rect x="0" y="821" width="1536" height="1.500" fill="#a8a8a8"/>
<rect x="0" y="822.500" width="1536" height="17.500" fill="#f0f0f0"/>
<path d="M44.500 824V840M416.500 824V840M790.500 824V840" stroke="#d8d8d8"/>
</svg>
</body></html>
